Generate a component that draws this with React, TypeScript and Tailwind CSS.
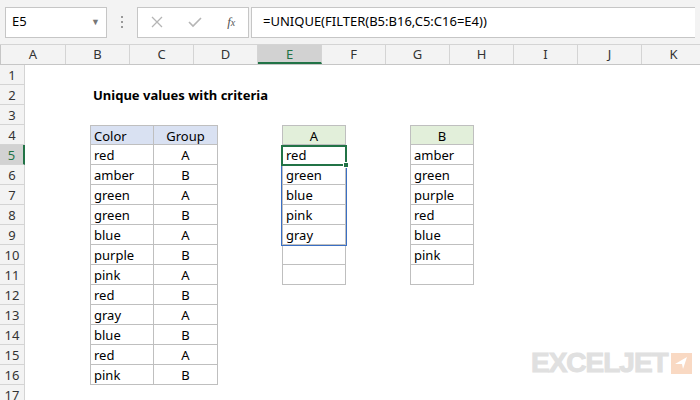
import React from "react";

const cols = ["A","B","C","D","E","F","G","H","I","J","K"];
const widths = [65,64,64,64,64,64,64,64,64,64,64];
const left = ["","red","amber","green","green","blue","purple","pink","red","gray","blue","red","pink"];
const grp = ["","A","B","A","B","A","B","A","B","A","B","A","B"];
const eVals = ["red","green","blue","pink","gray","",""];
const gVals = ["amber","green","purple","red","blue","pink",""];

type C = { text?: string; cls: string };

function cell(r: number, c: number): C {
  const base = "h-[20px] px-[3px] text-[13px] leading-[20px] whitespace-nowrap overflow-visible ";
  const bd = "border-r border-b border-[#bfbfbf] ";
  if (r === 2 && c === 1) return { text: "Unique values with criteria", cls: base + "font-bold" };
  if (r >= 4 && r <= 16 && (c === 1 || c === 2)) {
    let cls = base + bd + (c === 1 ? "border-l " : "text-center ") + (r === 4 ? "border-t bg-[#d9e1f2] " : "");
    const t = r === 4 ? (c === 1 ? "Color" : "Group") : c === 1 ? left[r - 4] : grp[r - 4];
    return { text: t, cls };
  }
  if (r >= 4 && r <= 11 && (c === 4 || c === 6)) {
    let cls = base + bd + "border-l " + (r === 4 ? "border-t bg-[#e2efda] text-center " : "");
    const t = r === 4 ? (c === 4 ? "A" : "B") : c === 4 ? eVals[r - 5] : gVals[r - 5];
    return { text: t, cls };
  }
  return { cls: base };
}

export default function App() {
  const rows = Array.from({ length: 17 }, (_, i) => i + 1);
  return (
    <div className="w-[700px] h-[400px] overflow-hidden bg-white relative" style={{ fontFamily: '"Noto Sans", "Open Sans", sans-serif' }}>
      <div className="h-[45px] bg-[#f3f3f3] flex items-center px-[5px] gap-0 border-b border-[#d4d4d4]">
        <div className="w-[102px] h-[31px] bg-white border border-[#c6c6c6] flex items-center justify-between px-[6px] text-[13px]">
          <span>E5</span>
          <span className="text-[#777] text-[9px]">▼</span>
        </div>
        <div className="w-[30px] flex flex-col items-center gap-[3px]">
          <span className="w-[2px] h-[2px] bg-[#999]"></span>
          <span className="w-[2px] h-[2px] bg-[#999]"></span>
          <span className="w-[2px] h-[2px] bg-[#999]"></span>
        </div>
        <div className="w-[112px] h-[31px] bg-white border border-[#c6c6c6] flex items-center justify-around text-[#b5b5b5]">
          <svg width="12" height="12" viewBox="0 0 12 12"><path d="M1 1L11 11M11 1L1 11" stroke="#b5b5b5" strokeWidth="1.3"/></svg>
          <svg width="14" height="12" viewBox="0 0 14 12"><path d="M1 6L5 10L13 2" stroke="#b5b5b5" strokeWidth="1.6" fill="none"/></svg>
          <span className="text-[#555] italic text-[13px]" style={{ fontFamily: '"Liberation Serif", serif' }}>f<span className="text-[10px]">x</span></span>
        </div>
        <div className="flex-1 h-[31px] bg-white border border-[#c6c6c6] border-r-0 ml-[2px] flex items-center px-[11px] text-[13px]">
          =UNIQUE(FILTER(B5:B16,C5:C16=E4))
        </div>
      </div>
      <div className="flex h-[20px] bg-[#f3f3f3] border-b border-[#c6c6c6] text-[13px]">
        <div className="w-[25px] border-r border-[#c6c6c6] relative">
          <svg className="absolute right-[3px] bottom-[3px]" width="11" height="11"><path d="M11 0L11 11L0 11Z" fill="#c0c0c0"/></svg>
        </div>
        {cols.map((c, i) => (
          <div key={c} style={{ width: widths[i] }} className={"shrink-0 text-center leading-[19px] border-r border-[#d4d4d4] " + (c === "E" ? "bg-[#d2d2d2] text-[#217346] border-b-2 border-b-[#217346]" : "text-[#333]")}>{c}</div>
        ))}
      </div>
      <div className="relative">
        {rows.map((r) => (
          <div key={r} className="flex h-[20px]">
            <div className={"w-[25px] shrink-0 text-center text-[13px] leading-[20px] border-r border-b border-[#d4d4d4] " + (r === 5 ? "bg-[#d2d2d2] text-[#217346] border-r-2 border-r-[#217346]" : "bg-[#f3f3f3] text-[#333]")}>{r}</div>
            {cols.map((_, c) => {
              const x = cell(r, c);
              return <div key={c} style={{ width: widths[c] }} className={"shrink-0 " + x.cls}>{x.text}</div>;
            })}
          </div>
        ))}
        <div className="absolute left-[281px] top-[80px] w-[66px] h-[101px] border border-[#3a6fc4] pointer-events-none"></div>
        <div className="absolute left-[281px] top-[80px] w-[66px] h-[21px] border-2 border-[#217346] pointer-events-none"></div>
        <div className="absolute left-[343px] top-[97px] w-[6px] h-[6px] bg-[#217346] border border-white"></div>
      </div>
      <div className="absolute left-[531px] top-[342px] flex items-center gap-[3px]">
        <span className="text-[28px] font-black text-[#e0e0e0] tracking-[-1px] [-webkit-text-stroke:1px_#e0e0e0]" style={{ fontFamily: '"Liberation Sans", sans-serif' }}>EXCELJET</span>
        <div className="w-[21px] h-[21px] bg-[#f9d9c3] flex items-center justify-center">
          <svg width="14" height="14" viewBox="0 0 14 14"><path d="M13 1L1 8L8 8L9 13Z" fill="white"/></svg>
        </div>
      </div>
    </div>
  );
}
